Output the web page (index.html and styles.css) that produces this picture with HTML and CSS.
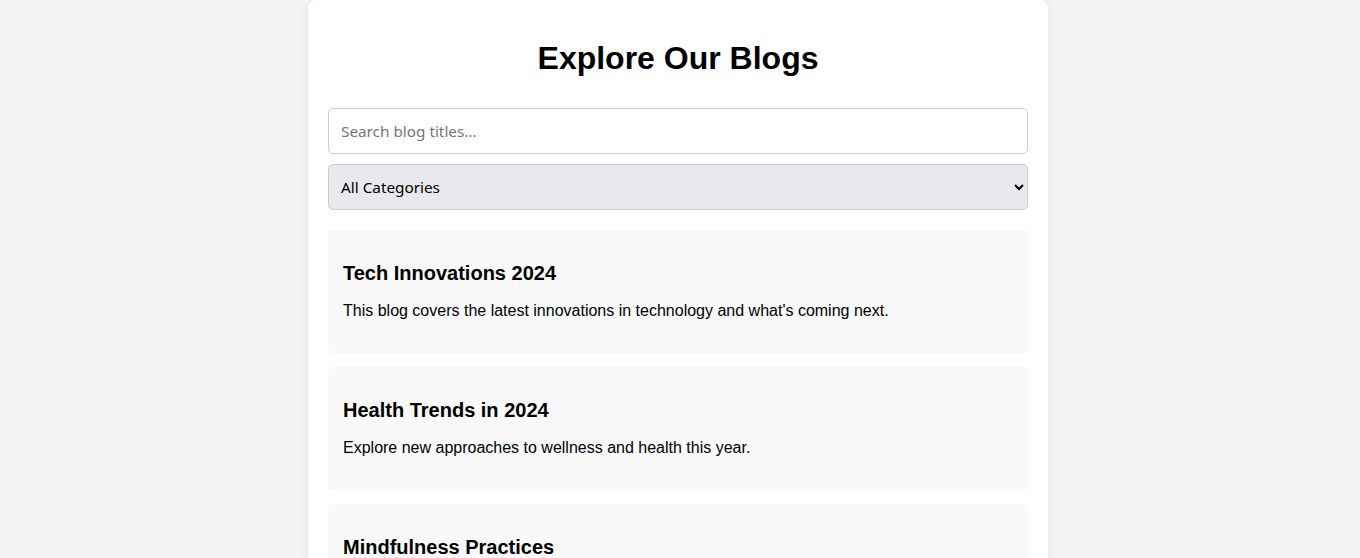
FILE: index.html
```html
<!DOCTYPE html>
<html lang="en">
<head>
<meta charset="utf-8">
<title>Explore Our Blogs</title>
<link rel="stylesheet" href="styles.css">
</head>
<body>
<div class="container">
  <h1 class="title">Explore Our Blogs</h1>
  <input class="search" type="text" placeholder="Search blog titles...">
  <select class="category">
    <option>All Categories</option>
    <option>Technology</option>
    <option>Health</option>
    <option>Lifestyle</option>
  </select>
  <div class="blog-list">
    <div class="card">
      <h3 class="card-title">Tech Innovations 2024</h3>
      <p class="card-text">This blog covers the latest innovations in technology and what's coming next.</p>
    </div>
    <div class="card">
      <h3 class="card-title">Health Trends in 2024</h3>
      <p class="card-text">Explore new approaches to wellness and health this year.</p>
    </div>
    <div class="card">
      <h3 class="card-title">Mindfulness Practices</h3>
      <p class="card-text">Simple daily habits to bring calm and focus into your life.</p>
    </div>
  </div>
</div>
</body>
</html>
```
FILE: styles.css
```css
html, body {
  margin: 0;
  padding: 0;
}
body {
  background: #f3f4f6;
  font-family: "Liberation Sans", Arial, sans-serif;
  color: #000;
  padding-right: 4px;
}
.container {
  width: 700px;
  margin: 0 auto;
  padding: 20px;
  background: #fff;
  border-radius: 8px;
  box-shadow: 0 0 10px rgba(0, 0, 0, 0.08);
  min-height: 600px;
}
.title {
  font-size: 32px;
  font-weight: bold;
  text-align: center;
  margin: 20px 0 31px;
  line-height: 37px;
}
.search,
.category {
  display: block;
  width: 100%;
  box-sizing: border-box;
  height: 46px;
  padding: 12px;
  font-family: "Noto Sans", sans-serif;
  font-size: 15.3px;
  color: #000;
  border: 1px solid #ccc;
  border-radius: 5px;
  margin: 0 0 10px;
}
.search {
  background: #fff;
}
.search::placeholder {
  color: #757575;
}
.category {
  background-color: #e9e8ed;
  padding: 0 8px;
  margin-bottom: 20px;
}
.blog-list {
  display: flex;
  flex-direction: column;
  gap: 15px;
}
.card {
  background: #f9f9f9;
  border-radius: 5px;
  padding: 15px;
  box-shadow: 0 1px 3px rgba(0, 0, 0, 0.04);
  height: 122px;
  box-sizing: border-box;
}
.card-title {
  font-size: 20px;
  font-weight: bold;
  line-height: 23px;
  margin: 17px 0 17px;
}
.card-text {
  font-size: 16px;
  line-height: 18px;
  margin: 0;
}
```
